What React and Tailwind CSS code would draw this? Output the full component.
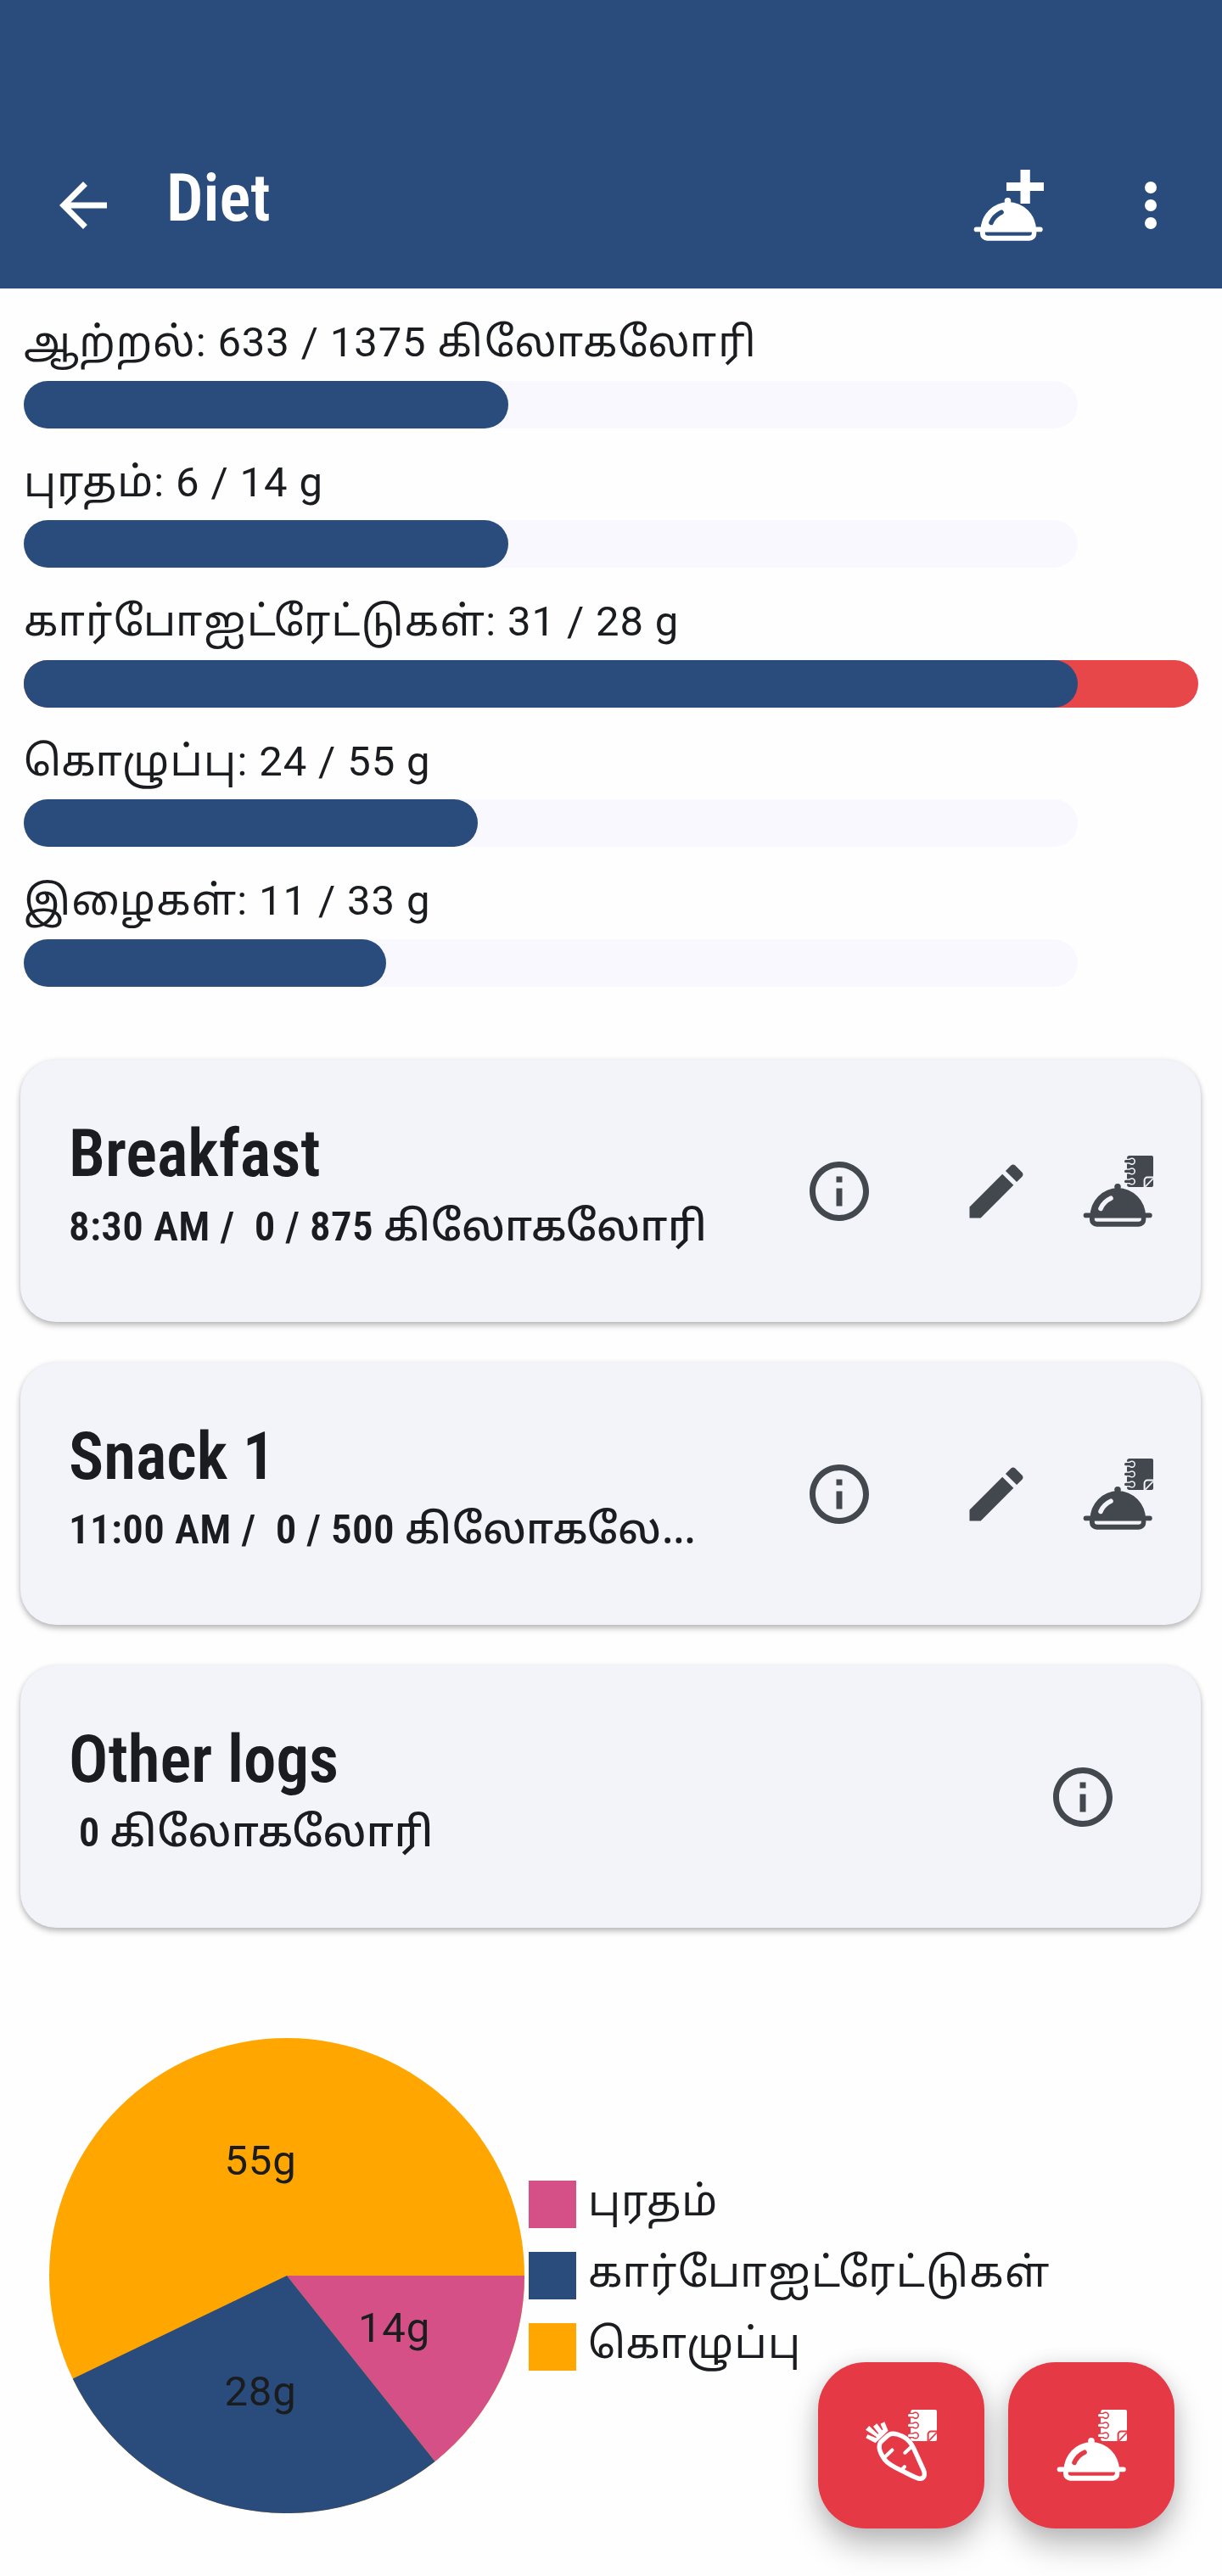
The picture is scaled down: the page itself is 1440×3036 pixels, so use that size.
const NUTRIENTS = [
  { parts: [["ஆற்றல்"], [": 633 / 1375 "], ["கிலோகலோரி", "tracking-[2.1px]"]], fill: 571 },
  { parts: [["புரதம்"], [": 6 / 14 g"]], fill: 571 },
  { parts: [["கார்போஐட்ரேட்டுகள்", "tracking-[1.28px]"], [": 31 / 28 g"]], fill: 1242, over: true },
  { parts: [["கொழுப்பு", "tracking-[1.31px]"], [": 24 / 55 g"]], fill: 535 },
  { parts: [["இழைகள்", "tracking-[1.09px]"], [": 11 / 33 g"]], fill: 427 },
];

const MEALS = [
  { title: "Breakfast", detail: "8:30 AM /  0 / 875 ", unit: "கிலோகலோரி", full: true },
  { title: "Snack 1", detail: "11:00 AM /  0 / 500 ", unit: "கிலோகலே", cut: true, full: true },
  { title: "Other logs", detail: " 0 ", unit: "கிலோகலோரி", full: false },
];

const LEGEND = [
  { label: "புரதம்", color: "bg-[#d45087]", tracking: "tracking-[0.875px]" },
  { label: "கார்போஐட்ரேட்டுகள்", color: "bg-[#2a4c7c]", tracking: "tracking-[1.33px]" },
  { label: "கொழுப்பு", color: "bg-[#ffa600]", tracking: "tracking-[1.31px]" },
];

function Dish({ id, cx = 42 }) {
  return (
    <>
      <mask id={id} maskUnits="userSpaceOnUse" x="0" y="0" width="84" height="84">
        <rect width="84" height="84" fill="white" />
        <path d="M22 62.4C24 57.5 28 53 34 50.2" stroke="black" strokeWidth="5.6" strokeLinecap="round" fill="none" />
      </mask>
      <g mask={`url(#${id})`}>
        <circle cx={cx} cy="36.8" r="3.8" />
        <path d="M9.5 71.5a32.8 33.4 0 0 1 65.6 0v1.8H9.5z" />
        <rect x="1.7" y="67.6" width="81" height="5.6" rx="2.8" />
        <path fillRule="evenodd" d="M9 70H75.3V75.5a8.3 8.3 0 0 1-8.3 8.3H17.3a8.3 8.3 0 0 1-8.3-8.3zM14.8 73.2v1.4a3.2 3.2 0 0 0 3.2 3.2h48.7a3.2 3.2 0 0 0 3.2-3.2v-1.4z" />
      </g>
    </>
  );
}

function Notebook({ id, children }) {
  return (
    <>
      <mask id={id} maskUnits="userSpaceOnUse" x="0" y="0" width="84" height="84">
        <rect width="84" height="84" fill="white" />
        {[6.7, 18.4, 30.4].map((y) => (
          <g key={y} stroke="black" fill="black">
            <path d={`M50 ${y}H58.6`} strokeWidth="6" />
            <circle cx="58.8" cy={y} r="4.2" strokeWidth="0" />
          </g>
        ))}
        <path d="M73.6 38V29a3.4 3.4 0 0 1 3.4-3.4H85" stroke="black" strokeWidth="2" fill="none" />
        <path d="M74.6 36.6L84 26.9" stroke="black" strokeWidth="1.7" />
        {children}
      </mask>
      <path mask={`url(#${id})`} d="M56 0H82a2 2 0 0 1 2 2V35a2 2 0 0 1-2 2H56a3 3 0 0 1-3-3V3a3 3 0 0 1 3-3z" />
      {[6.7, 18.4, 30.4].map((y) => (
        <g key={y}>
          <rect x="50" y={y - 1.6} width="9" height="3.2" rx="1.6" />
          <circle cx="58.8" cy={y} r="2.6" />
        </g>
      ))}
    </>
  );
}

function DishPlusIcon() {
  return (
    <svg viewBox="0 0 84 84" className="size-[84px]" fill="currentColor">
      <path d="M56.5 0h11.3v15h16.4v10H67.8v15H56.5V25H40V15h16.5z" />
      <Dish id="shine-add" cx={41.5} />
    </svg>
  );
}

function DishLogIcon({ id }) {
  return (
    <svg viewBox="0 0 84 84" className="size-[84px]" fill="currentColor">
      <Notebook id={`${id}-book`} />
      <Dish id={`${id}-dish`} />
    </svg>
  );
}

function CarrotLogIcon() {
  return (
    <svg viewBox="0 0 84 84" className="size-[84px]" fill="currentColor">
      <Notebook id="carrot-book">
        <path d="M50 34L56 43 46 43 40 30z" fill="black" />
      </Notebook>
      <path d="M0.3 33.2L2.4 29.2 12.2 33.3 13 32.3 0 23.7 4.2 19 14.3 28.7 15.3 27.9 9 19.8 13.3 16.3 19.4 24.2 20.4 23.4 17.5 16.8 22.3 14.2 26.6 24.8 11.6 39.2z" />
      <path
        d="M17.5 38.5C20.5 35.5 25 31 28 29.3C32.5 26.6 42 29.6 48 34.2C52 37.3 54.3 40.8 56.5 45.2L68.4 71.3C70.6 77 69 81.6 63.4 81.2C60 81 52 76.6 45 73C36 68.6 27.5 65.2 22.6 58.8C19 53.8 16.4 49 16.2 44.8C16.1 42.3 16.4 40 17.5 38.5Z"
        fill="none"
        stroke="currentColor"
        strokeWidth="5.4"
      />
      <path d="M22 56.6L31.4 47.6M53.6 44L46.4 50.8M42.6 71L46 67.2" fill="none" stroke="currentColor" strokeWidth="4.2" strokeLinecap="round" />
    </svg>
  );
}

function InfoIcon() {
  return (
    <svg viewBox="0 0 24 24" className="size-[84px]" fill="currentColor">
      <path d="M11 7h2v2h-2zm0 4h2v6h-2zm1-9C6.48 2 2 6.48 2 12s4.48 10 10 10 10-4.48 10-10S17.52 2 12 2zm0 18c-4.41 0-8-3.59-8-8s3.59-8 8-8 8 3.59 8 8-3.59 8-8 8z" />
    </svg>
  );
}

function PencilIcon() {
  return (
    <svg viewBox="0 0 24 24" className="size-[84px]" fill="currentColor">
      <path d="M3 17.25V21h3.75L17.81 9.94l-3.75-3.75L3 17.25zM20.71 7.04c.39-.39.39-1.02 0-1.41l-2.34-2.34c-.39-.39-1.02-.39-1.41 0l-1.83 1.83 3.75 3.75 1.83-1.83z" />
    </svg>
  );
}

function Header() {
  return (
    <header className="flex h-[340px] items-start bg-[#2a4c7c] pt-[200px] pl-14 text-white">
      <svg viewBox="0 0 24 24" className="size-[84px]" fill="currentColor">
        <path d="M20 11H7.83l5.59-5.59L12 4l-8 8 8 8 1.41-1.41L7.83 13H20v-2z" />
      </svg>
      <h1 className="mt-[-11px] ml-14 text-[77px] leading-[90px] font-semibold [font-stretch:75%]">Diet</h1>
      <div className="mr-[42px] ml-auto flex gap-[84px]">
        <DishPlusIcon />
        <svg viewBox="0 0 24 24" className="size-[84px]" fill="currentColor">
          <circle cx="12" cy="6" r="2" />
          <circle cx="12" cy="12" r="2" />
          <circle cx="12" cy="18" r="2" />
        </svg>
      </div>
    </header>
  );
}

function Nutrient({ parts, fill, over }) {
  return (
    <div className="h-[164.5px]">
      <p className="h-14 text-[49px] leading-[56px] tracking-[0.875px] whitespace-pre">
        {parts.map(([text, tracking]) => <span key={text} className={tracking}>{text}</span>)}
      </p>
      <div className={over ? "mt-[16.4px] h-14 w-[1384px] rounded-full bg-[#e84749]" : "mt-[16.4px] h-14 w-[1242px] rounded-full bg-[#f9f8ff]"}>
        <div className="h-14 rounded-full bg-[#2a4c7c]" style={{ width: fill }} />
      </div>
    </div>
  );
}

function MealCard({ title, detail, unit, cut, full, index }) {
  return (
    <article className="flex h-[309px] items-start rounded-[42px] bg-[#f3f4fa] pl-[57px] shadow-[0_4px_7px_rgba(0,0,0,0.26),0_0_6px_rgba(0,0,0,0.06)]">
      <div className="pt-[66px]">
        <h2 className="text-[77px] leading-[90px] font-semibold whitespace-pre [font-stretch:75%]">{title}</h2>
        <p className="mt-[13px] h-14 text-[49px] leading-[56px] font-semibold tracking-[0.35px] whitespace-pre [font-stretch:75%]">
          {detail}
          <span className="font-medium tracking-[0.77px]">{unit}</span>
          {cut && <span className="font-['Noto_Sans'] leading-none font-medium [font-stretch:100%]">…</span>}
        </p>
      </div>
      {full ? (
        <div className="mt-[113px] mr-14 ml-auto flex text-[#43484e]">
          <InfoIcon />
          <div className="ml-[101.5px]"><PencilIcon /></div>
          <div className="ml-[59px]"><DishLogIcon id={`meal-${index}`} /></div>
        </div>
      ) : (
        <div className="mt-[113px] mr-[97.5px] ml-auto text-[#43484e]">
          <InfoIcon />
        </div>
      )}
    </article>
  );
}

function PieChart() {
  return (
    <svg viewBox="0 0 560 560" className="size-[560px]">
      <circle cx="280" cy="280" r="280" fill="#ffa600" />
      <path d="M280 280H560A280 280 0 0 1 454.6 498.9z" fill="#d45087" />
      <path d="M280 280L454.6 498.9A280 280 0 0 1 27.7 401.5z" fill="#2a4c7c" />
      <g fill="#1a1c1e" fontSize="49" letterSpacing="0.875" textAnchor="middle">
        <text x="249" y="161">55g</text>
        <text x="406.5" y="358">14g</text>
        <text x="249" y="433">28g</text>
      </g>
    </svg>
  );
}

export default function App() {
  return (
    <main className="relative h-[3036px] w-[1440px] overflow-hidden bg-[#fefefe] font-[Roboto,'Noto_Sans_Tamil','Noto_Sans',sans-serif] text-[#1a1c20]">
      <Header />
      <section className="h-[909px] px-7 pt-[36.4px]">
        {NUTRIENTS.map((n) => <Nutrient key={n.parts[0][0]} {...n} />)}
      </section>
      <section className="flex flex-col gap-12 pr-[25px] pl-6">
        {MEALS.map((m, i) => <MealCard key={m.title} index={i} {...m} />)}
      </section>
      <section className="flex pt-[130px] pl-[58px]">
        <PieChart />
        <ul className="mt-[168px] ml-[5px] flex flex-col gap-7">
          {LEGEND.map((l) => (
            <li key={l.label} className="flex h-14 items-center gap-[14px]">
              <span className={`size-14 ${l.color}`} />
              <span className={`-mt-[6px] text-[49px] leading-[56px] ${l.tracking}`}>{l.label}</span>
            </li>
          ))}
        </ul>
      </section>
      <div className="absolute right-14 bottom-14 flex gap-7 text-white">
        <button className="grid size-[196px] place-items-center rounded-[56px] bg-[#e63946] shadow-[0_20px_36px_rgba(0,0,0,0.26),0_0_22px_rgba(0,0,0,0.08)]"><CarrotLogIcon /></button>
        <button className="grid size-[196px] place-items-center rounded-[56px] bg-[#e63946] shadow-[0_20px_36px_rgba(0,0,0,0.26),0_0_22px_rgba(0,0,0,0.08)]"><DishLogIcon id="fab" /></button>
      </div>
    </main>
  );
}
